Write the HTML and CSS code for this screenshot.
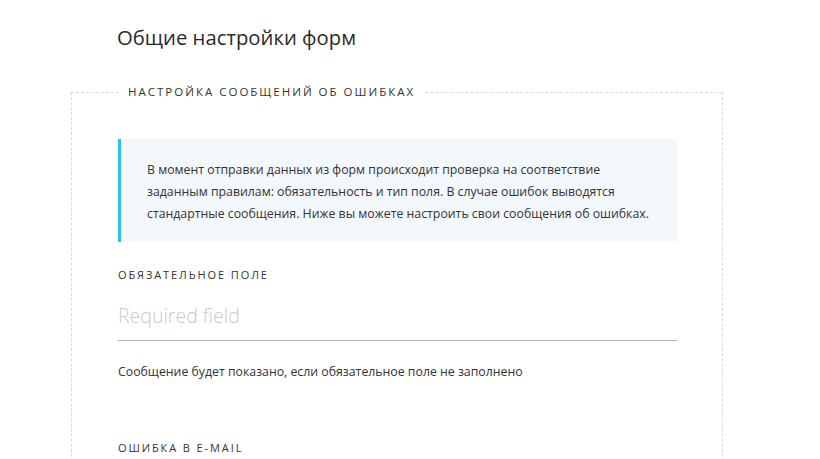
FILE: index.html
```html
<!DOCTYPE html>
<html lang="ru">
<head>
<meta charset="utf-8">
<title>Общие настройки форм</title>
<link rel="stylesheet" href="styles.css">
</head>
<body>
<div class="page">
  <h1 class="title">Общие настройки форм</h1>
  <fieldset class="group">
    <legend class="group-legend">Настройка сообщений об ошибках</legend>
    <div class="notice">
      <p>В момент отправки данных из форм происходит проверка на соответствие<br>заданным правилам: обязательность и тип поля. В случае ошибок выводятся<br>стандартные сообщения. Ниже вы можете настроить свои сообщения об ошибках.</p>
    </div>
    <div class="field">
      <label class="field-label" for="req">Обязательное поле</label>
      <input class="field-input" id="req" type="text" placeholder="Required field">
      <div class="field-help">Сообщение будет показано, если обязательное поле не заполнено</div>
    </div>
    <div class="field">
      <label class="field-label" for="mail">Ошибка в e-mail</label>
    </div>
  </fieldset>
</div>
</body>
</html>
```

FILE: styles.css
```css
html, body {
  margin: 0;
  padding: 0;
  background: #fff;
}
body {
  font-family: "Open Sans", "Noto Sans", sans-serif;
  color: #333;
  overflow: hidden;
}
.page {
  width: 652px;
  margin-left: 71px;
}
.title {
  margin: 0;
  padding: 22px 0 0 46px;
  font-size: 20.3px;
  line-height: 30px;
  font-weight: 400;
  color: #2a2a2a;
}
.group {
  margin: 32px 0 0 0;
  padding: 0 45px 60px 46px;
  border: 1px dashed #dadada;
  min-width: 0;
}
.group-legend {
  padding: 0 10px;
  font-size: 11.5px;
  letter-spacing: 2px;
  text-transform: uppercase;
  line-height: 16px;
  color: #333;
}
.notice {
  margin-top: 39px;
  background: #f3f8fd;
  border-left: 3px solid #22c7e6;
  padding: 20px 8px 17px 26px;
}
.notice p {
  margin: 0;
  font-size: 12.3px;
  line-height: 22px;
  color: #333;
  white-space: nowrap;
}
.field {
  margin-top: 25px;
}
.field + .field {
  margin-top: 60px;
}
.field-label {
  display: block;
  font-size: 11px;
  letter-spacing: 1.9px;
  line-height: 16px;
  text-transform: uppercase;
  color: #333;
}
.field-input {
  display: block;
  box-sizing: border-box;
  width: 100%;
  margin-top: 14px;
  padding: 0 0 6px 0;
  height: 44px;
  border: 0;
  border-bottom: 1px solid #b5b5b5;
  background: transparent;
  font-family: "Open Sans", "Noto Sans", sans-serif;
  font-size: 19.5px;
  font-weight: 300;
  color: #333;
  outline: none;
}
.field-input::placeholder {
  color: #cdc8c8;
}
.field-help {
  margin-top: 23px;
  font-size: 12.3px;
  line-height: 16px;
  color: #333;
}
```
